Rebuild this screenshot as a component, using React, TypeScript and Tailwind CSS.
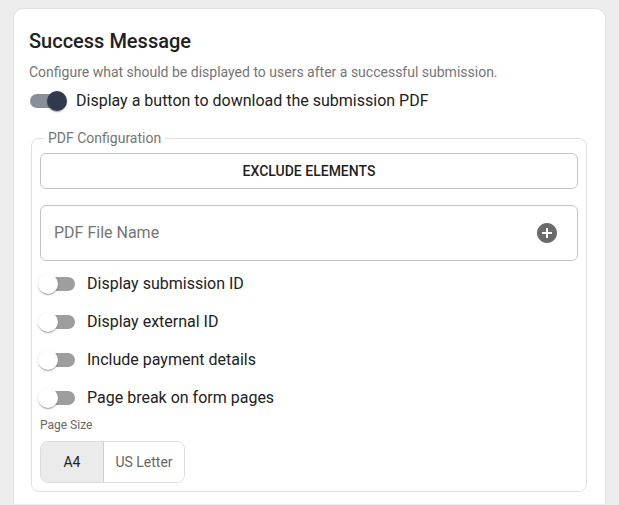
import { useState } from "react";

type SwitchProps = {
  checked: boolean;
  onChange: () => void;
  label: string;
};

function cx(...a: (string | false | null | undefined)[]) {
  return a.filter(Boolean).join(" ");
}

// MUI-style switch: 58x38 root, 34x14 track, 20px thumb
function Toggle({ checked, onChange, label }: SwitchProps) {
  return (
    <label className="-ml-[11px] flex h-[38px] cursor-pointer items-center">
      <span className="relative block h-[38px] w-[58px] shrink-0" onClick={onChange}>
        <span
          className={cx(
            "absolute left-[12px] top-[12px] h-[14px] w-[34px] rounded-full",
            checked ? "bg-[#8a8e98]" : "bg-[#9e9e9e]"
          )}
        />
        <span
          className={cx(
            "absolute top-[9px] h-[20px] w-[20px] rounded-full shadow-[0_2px_1px_-1px_rgba(0,0,0,0.2),0_1px_1px_0_rgba(0,0,0,0.14),0_1px_3px_0_rgba(0,0,0,0.12)] transition-all",
            checked ? "left-[29px] bg-[#2f3a4f]" : "left-[9px] bg-white"
          )}
        />
      </span>
      <span className="text-base text-[#222]">{label}</span>
    </label>
  );
}

export default function App() {
  const [showPdf, setShowPdf] = useState(true);
  const [opts, setOpts] = useState({
    submissionId: false,
    externalId: false,
    payment: false,
    pageBreak: false,
  });
  const [size, setSize] = useState<"A4" | "US Letter">("A4");

  const toggle = (k: keyof typeof opts) => setOpts((o) => ({ ...o, [k]: !o[k] }));

  return (
    <div className="min-h-[505px] bg-[#ededed] pt-[8px] font-['Roboto',sans-serif]">
      <div className="ml-[13px] w-[593px] rounded-t-[10px] border border-b-0 border-[#e3e3e3] bg-white px-[15px] pt-[18px] pb-[12px]">
        <h2 className="text-xl font-medium leading-7 text-[#212121]">Success Message</h2>
        <p className="mt-[7px] text-sm leading-5 text-[#757575]">
          Configure what should be displayed to users after a successful submission.
        </p>
        <Toggle
          checked={showPdf}
          onChange={() => setShowPdf((v) => !v)}
          label="Display a button to download the submission PDF"
        />

        <fieldset className="mt-[8px] ml-[2px] mr-[3px] rounded-lg border border-[#e0e0e0] px-[8px] pb-[8px]">
          <legend className="ml-[4px] px-[4px] text-sm leading-5 text-[#757575]">
            PDF Configuration
          </legend>
          <button className="mt-[5px] flex h-[36px] w-full items-center justify-center rounded-md border border-[#c4c4c4] text-sm font-medium uppercase text-[#1f1f1f]">
            Exclude Elements
          </button>
          <div className="mt-[16px] flex h-[56px] items-center rounded-md border border-[#c4c4c4] pl-[13px] pr-[18px]">
            <input
              placeholder="PDF File Name"
              className="flex-1 bg-transparent text-base text-[#222] outline-none placeholder:text-[#757575]"
            />
            <svg viewBox="0 0 24 24" className="h-[24px] w-[24px] fill-[#6b6b6b]">
              <path d="M12 2C6.48 2 2 6.48 2 12s4.48 10 10 10 10-4.48 10-10S17.52 2 12 2zm5 11h-4v4h-2v-4H7v-2h4V7h2v4h4v2z" />
            </svg>
          </div>

          <div className="mt-[4px]">
            <Toggle checked={opts.submissionId} onChange={() => toggle("submissionId")} label="Display submission ID" />
            <Toggle checked={opts.externalId} onChange={() => toggle("externalId")} label="Display external ID" />
            <Toggle checked={opts.payment} onChange={() => toggle("payment")} label="Include payment details" />
            <Toggle checked={opts.pageBreak} onChange={() => toggle("pageBreak")} label="Page break on form pages" />
          </div>

          <div className="text-xs leading-4 text-[#666]">Page Size</div>
          <div className="mt-[8px] flex h-[42px] w-fit overflow-hidden rounded-lg border border-[#dcdcdc]">
            {(["A4", "US Letter"] as const).map((s) => (
              <button
                key={s}
                onClick={() => setSize(s)}
                className={cx(
                  "text-sm",
                  s === "A4" ? "w-[63px] border-r border-[#d0d0d0]" : "w-[80px]",
                  size === s ? "bg-[#ebebeb] text-[#1f1f1f]" : "bg-white text-[#666]"
                )}
              >
                {s}
              </button>
            ))}
          </div>
        </fieldset>
      </div>
    </div>
  );
}
